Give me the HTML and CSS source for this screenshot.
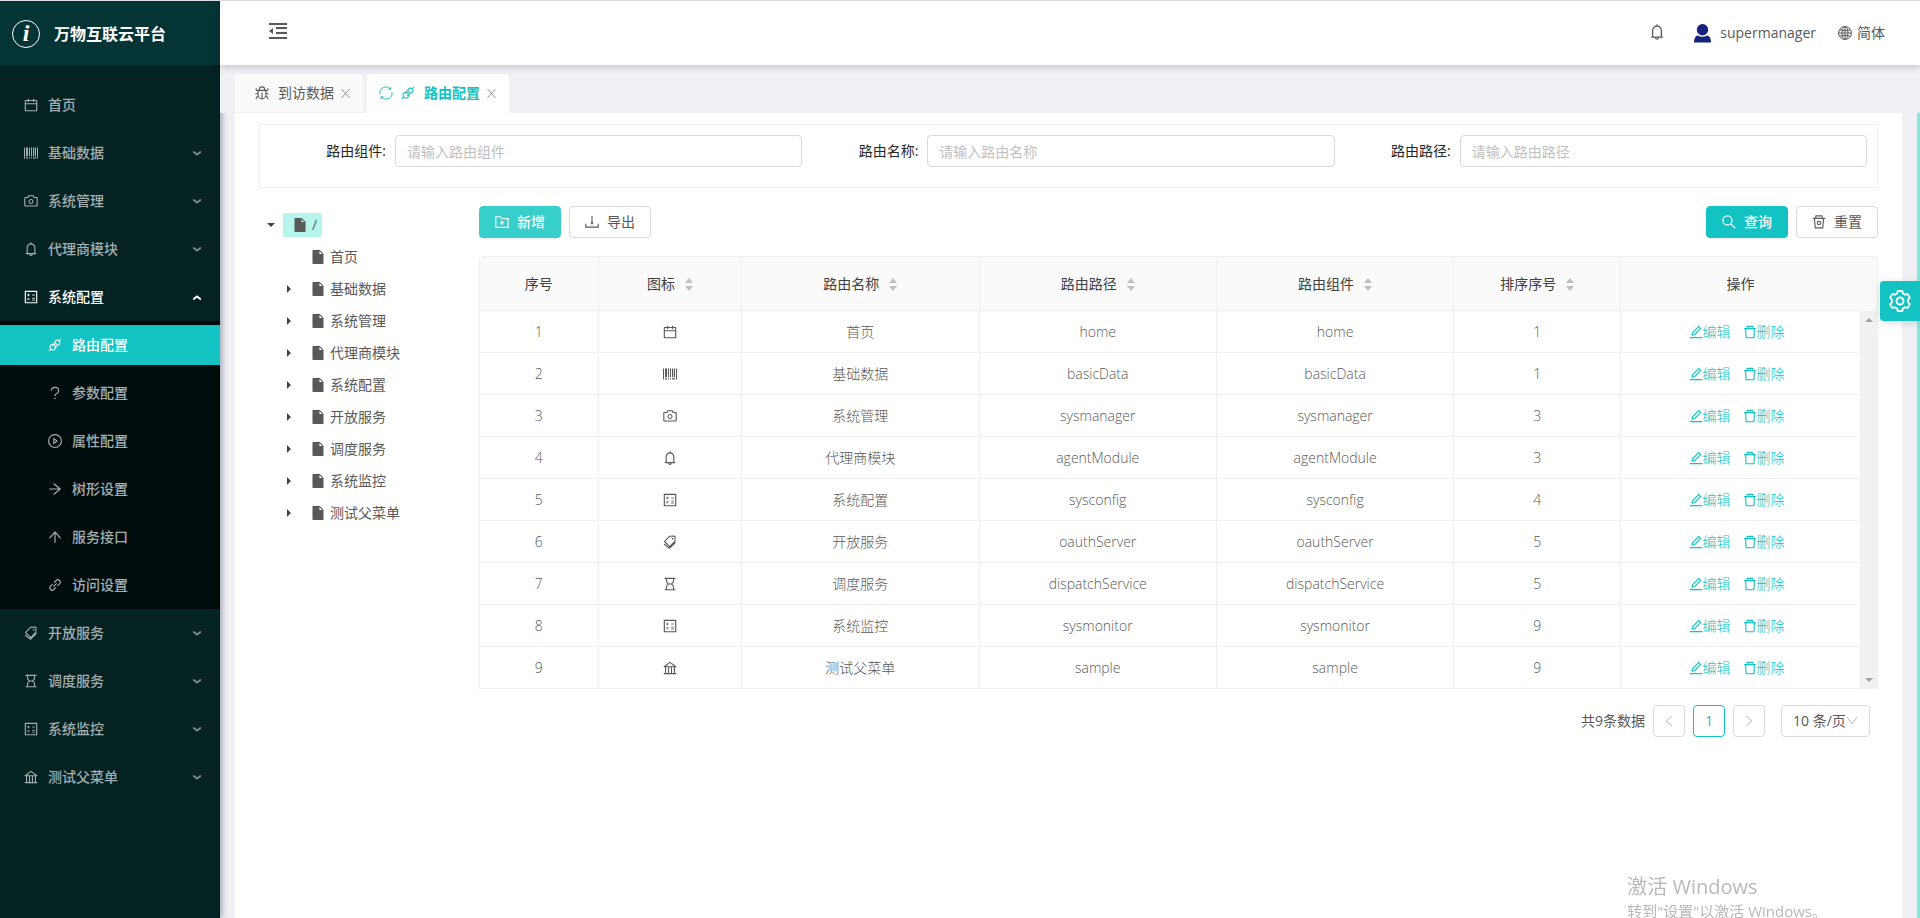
FILE: index.html
```
<!DOCTYPE html>
<html lang="zh-CN">
<head>
    <meta charset="UTF-8">
    <meta name="viewport" content="width=device-width, initial-scale=1.0">
    <title>万物互联云平台</title>
    <link rel="stylesheet" href="styles.css">
</head>
<body>
    <!-- icon sprite -->
    <svg class="sprite" aria-hidden="true">
        <symbol id="i-calendar" viewBox="64 64 896 896"><path d="M880 184H712v-64c0-4.400-3.600-8-8-8h-56c-4.400 0-8 3.600-8 8v64H384v-64c0-4.400-3.600-8-8-8h-56c-4.400 0-8 3.600-8 8v64H144c-17.700 0-32 14.300-32 32v664c0 17.700 14.300 32 32 32h736c17.700 0 32-14.300 32-32V216c0-17.700-14.300-32-32-32zm-40 656H184V460h656v380zM184 392V256h128v48c0 4.400 3.600 8 8 8h56c4.400 0 8-3.600 8-8v-48h256v48c0 4.400 3.600 8 8 8h56c4.400 0 8-3.600 8-8v-48h128v136H184z"/></symbol>
        <symbol id="i-barcode" viewBox="64 64 896 896"><path d="M64 160h64v704H64zM897 160h64v704h-64zM192 160h128v560H192zM384 160h64v560h-64zM512 160h64v560h-64zM640 160h64v560h-64zM752 160h80v560h-80zM192 784h128v80H192zM384 784h64v80h-64zM512 784h64v80h-64zM640 784h192v80H640z"/></symbol>
        <symbol id="i-camera" viewBox="64 64 896 896"><path d="M864 248H728l-32.400-90.800a32 32 0 0 0-30.200-21.200H358.600c-13.500 0-25.600 8.500-30.100 21.200L296 248H160c-44.200 0-80 35.800-80 80v456c0 44.200 35.800 80 80 80h704c44.200 0 80-35.800 80-80V328c0-44.200-35.800-80-80-80zm8 536c0 4.400-3.600 8-8 8H160c-4.400 0-8-3.600-8-8V328c0-4.400 3.600-8 8-8h186.700l17.100-47.800 22.900-64.200h250.500l22.900 64.200 17.100 47.800H864c4.400 0 8 3.600 8 8v456zM512 384c-88.400 0-160 71.600-160 160s71.600 160 160 160 160-71.600 160-160-71.600-160-160-160zm0 256c-53 0-96-43-96-96s43-96 96-96 96 43 96 96-43 96-96 96z"/></symbol>
        <symbol id="i-bell" viewBox="64 64 896 896"><path d="M816 768h-24V428c0-141.100-104.300-257.800-240-277.200V112c0-22.100-17.900-40-40-40s-40 17.900-40 40v38.800C336.300 170.200 232 286.900 232 428v340h-24c-17.700 0-32 14.300-32 32v32c0 4.400 3.600 8 8 8h216c0 61.800 50.200 112 112 112s112-50.200 112-112h216c4.400 0 8-3.600 8-8v-32c0-17.700-14.300-32-32-32zM512 888c-26.500 0-48-21.500-48-48h96c0 26.500-21.500 48-48 48zM304 768V428c0-55.600 21.600-107.800 60.900-147.100S456.400 220 512 220c55.600 0 107.800 21.600 147.100 60.900S720 372.400 720 428v340H304z"/></symbol>
        <symbol id="i-calculator" viewBox="64 64 896 896"><g fill="none" stroke="currentColor"><path stroke-width="72" d="M148 148h728v728H148z"/><path stroke-width="52" d="M260 384h170M345 299v170M585 384h180M585 592h180M585 710h180M275 585l140 140M415 585L275 725"/></g></symbol>
        <symbol id="i-api" viewBox="64 64 896 896"><g fill="none" stroke="currentColor" stroke-width="66"><path d="M415 410l-75 75L245 500q-80 90-35 235l80 80q145 45 235-35l15-95 75-75M609 614l-205-205M485 340l200 200 90-60q80-100 35-195l-70-70q-95-45-195 35zM770 254l135-135M254 770L119 905M530 600l-70 75M425 495l-75 70"/></g></symbol>
        <symbol id="i-question" viewBox="64 64 896 896"><g fill="none" stroke="currentColor" stroke-width="72"><path d="M276 370c0-130 100-218 236-218s236 88 236 210c0 100-60 165-150 200-62 24-86 60-86 115v50"/></g><circle cx="512" cy="864" r="52"/></symbol>
        <symbol id="i-play" viewBox="64 64 896 896"><g fill="none" stroke="currentColor" stroke-width="72"><circle cx="512" cy="512" r="412"/><path d="M438 360l208 152-208 152z"/></g></symbol>
        <symbol id="i-right" viewBox="64 64 896 896"><path d="M869 487.800L491.200 159.900c-2.900-2.500-6.600-3.900-10.500-3.900h-88.500c-7.400 0-10.800 9.200-5.200 14l350.200 304H152c-4.400 0-8 3.600-8 8v60c0 4.400 3.600 8 8 8h585.100L386.900 854c-5.600 4.900-2.200 14 5.200 14h91.500c1.900 0 3.800-.7 5.200-2L869 536.200a32 32 0 0 0 0-48.400z"/></symbol>
        <symbol id="i-up" viewBox="64 64 896 896"><path transform="rotate(-90 512 512)" d="M869 487.800L491.200 159.900c-2.900-2.500-6.600-3.900-10.500-3.900h-88.500c-7.400 0-10.800 9.200-5.200 14l350.200 304H152c-4.400 0-8 3.600-8 8v60c0 4.400 3.600 8 8 8h585.100L386.900 854c-5.600 4.900-2.200 14 5.200 14h91.500c1.900 0 3.800-.7 5.200-2L869 536.200a32 32 0 0 0 0-48.400z"/></symbol>
        <symbol id="i-link" viewBox="64 64 896 896"><g fill="none" stroke="currentColor" stroke-width="72"><path d="M574 665L440 800c-60 60-155 60-215 0s-60-155 0-215l134-134M450 359l134-135c60-60 155-60 215 0s60 155 0 215L665 573M405 619l214-214"/></g></symbol>
        <symbol id="i-tags" viewBox="64 64 896 896"><g fill="none" stroke="currentColor" stroke-width="68"><path d="M484 150l310-20 46 48-22 300-330 330-328-328zM130 640l350 275 380-375"/></g><circle cx="680" cy="300" r="54"/></symbol>
        <symbol id="i-hourglass" viewBox="64 64 896 896"><path fill="none" stroke="currentColor" stroke-width="72" d="M162 148h700M162 876h700M286 148v160c0 95 60 170 140 204-80 34-140 110-140 204v160M738 148v160c0 95-60 170-140 204 80 34 140 110 140 204v160M426 512h172"/></symbol>
        <symbol id="i-bank" viewBox="64 64 896 896"><path d="M894 462c30.900 0 43.800-39.700 18.700-58L530.800 126.200a31.800 31.800 0 0 0-37.600 0L111.300 404c-25.100 18.200-12.200 58 18.800 58H192v374h-72c-4.400 0-8 3.600-8 8v52c0 4.400 3.600 8 8 8h784c4.400 0 8-3.600 8-8v-52c0-4.400-3.600-8-8-8h-72V462h62zM512 196.700l271.100 197.200H240.900L512 196.700zM264 462h117v374H264V462zm189 0h117v374H453V462zm307 374H642V462h118v374z"/></symbol>
        <symbol id="i-bug" viewBox="64 64 896 896"><g fill="none" stroke="currentColor" stroke-width="72"><path d="M260 340h504v280c0 150-112 268-252 268S260 770 260 620zM340 340V300c0-100 74-184 172-184s172 84 172 184v40M512 480v408M140 200v100q0 80 120 80M884 200v100q0 80-120 80M90 560h170M764 560h170M140 910v-70q0-90 130-120M884 910v-70q0-90-130-120"/></g></symbol>
        <symbol id="i-reload" viewBox="64 64 896 896"><g fill="none" stroke="currentColor" stroke-width="60"><path d="M132 580A382 382 0 0 1 800 260M892 444A382 382 0 0 1 224 764"/><path d="M820 130v145H675M204 894V749h145"/></g></symbol>
        <symbol id="i-close" viewBox="64 64 896 896"><path fill="none" stroke="currentColor" stroke-width="76" d="M190 150l644 724M834 150L190 874"/></symbol>
        <symbol id="i-file" viewBox="64 64 896 896"><path d="M854.600 288.700c6 6 9.400 14.100 9.400 22.600V928c0 17.700-14.300 32-32 32H192c-17.700 0-32-14.300-32-32V96c0-17.700 14.300-32 32-32h424.700c8.500 0 16.700 3.400 22.700 9.400l215.200 215.300zM790.200 326L602 137.800V326h188.200z"/></symbol>
        <symbol id="i-folder-add" viewBox="64 64 896 896"><path fill="none" stroke="currentColor" stroke-width="72" d="M116 172h280l124 122h388v558H116zM512 420v280M372 560h280"/></symbol>
        <symbol id="i-export" viewBox="64 64 896 896"><g fill="none" stroke="currentColor" stroke-width="72"><path d="M116 626v214h792V626M512 150v440"/></g><path d="M396 540h232L512 690z"/></symbol>
        <symbol id="i-search" viewBox="64 64 896 896"><g fill="none" stroke="currentColor" stroke-width="80"><circle cx="412" cy="412" r="290"/><path d="M620 620l290 290"/></g></symbol>
        <symbol id="i-rest" viewBox="64 64 896 896"><g fill="none" stroke="currentColor" stroke-width="72"><path d="M296 240l24-118h384l24 118M120 276h784M220 290l50 600h484l50-600"/><circle cx="512" cy="576" r="108"/></g></symbol>
        <symbol id="i-edit" viewBox="64 64 896 896"><path d="M257.700 752c2 0 4-.2 6-.5L431.900 722c2-.4 3.900-1.300 5.300-2.800l423.900-423.900a10 10 0 0 0 0-14.100L694.900 114.900c-1.900-1.900-4.400-2.900-7.100-2.900s-5.200 1-7.100 2.900L256.800 538.800c-1.500 1.500-2.400 3.300-2.800 5.300l-29.500 168.200a33.500 33.500 0 0 0 9.400 29.800c6.600 6.400 14.900 9.900 23.800 9.900zm67.400-174.400L687.800 215l73.300 73.300-362.700 362.600-88.900 15.700 15.600-89zM880 836H144c-17.700 0-32 14.300-32 32v36c0 4.400 3.600 8 8 8h784c4.400 0 8-3.600 8-8v-36c0-17.700-14.300-32-32-32z"/></symbol>
        <symbol id="i-delete" viewBox="64 64 896 896"><path d="M360 184h304v72h72v-80c0-35.300-28.700-64-64-64H352c-35.300 0-64 28.700-64 64v80h72v-72zm504 72H160c-17.700 0-32 14.300-32 32v32c0 4.400 3.600 8 8 8h60.400l24.700 523c1.600 34.100 29.800 61 63.900 61h454c34.200 0 62.300-26.800 63.900-61l24.700-523H888c4.400 0 8-3.600 8-8v-32c0-17.700-14.300-32-32-32zM731.300 840H292.700l-24.200-512h487l-24.200 512z"/></symbol>
        <symbol id="i-global" viewBox="64 64 896 896"><g fill="none" stroke="currentColor" stroke-width="64"><circle cx="512" cy="512" r="410"/><ellipse cx="512" cy="512" rx="190" ry="410"/><path d="M102 512h820M512 102v820M170 310q342 120 684 0M170 714q342-120 684 0"/></g></symbol>
        <symbol id="i-fold" viewBox="0 0 18 18"><path d="M0 1h18v2H0zM7 5h11v2H7zM7 10h11v2H7zM0 15h18v2H0zM0 9l4-3v6z"/></symbol>
        <symbol id="i-user" viewBox="0 0 18 20"><circle cx="9" cy="6" r="6"/><path d="M4 12q5 3 10 0 4 1 4 7.500H0Q0 13 4 12z"/></symbol>
        <symbol id="i-down" viewBox="0 0 8 5"><path fill="none" stroke="currentColor" stroke-width="2" d="M0 0.600l4 3 4-3"/></symbol>
        <symbol id="i-prev" viewBox="0 0 12 12"><path fill="none" stroke="currentColor" d="M9 1L3 6l6 5"/></symbol>
        <symbol id="i-next" viewBox="0 0 12 12"><path fill="none" stroke="currentColor" d="M3 1l6 5-6 5"/></symbol>
        <symbol id="i-select" viewBox="0 0 12 12"><path fill="none" stroke="currentColor" d="M1 2l5 7 5-7"/></symbol>
        <symbol id="i-sort" viewBox="0 0 8 14"><path d="M4 0l4 5H0zM4 13l4-5H0z"/></symbol>
        <symbol id="i-setting" viewBox="64 64 896 896"><path transform="translate(36 36) scale(.93)" fill="none" stroke="currentColor" stroke-width="80" d="M924.800 625.700l-65.500-56c3.100-19 4.700-38.400 4.700-57.800s-1.600-38.800-4.700-57.800l65.500-56a32 32 0 0 0 9.300-35.200l-.9-2.600a442.500 442.500 0 0 0-79.700-137.900l-1.800-2.100a32 32 0 0 0-35.100-9.500l-81.300 28.900c-30-24.600-63.500-44-99.700-57.600l-15.700-85a32 32 0 0 0-25.800-25.700l-2.700-.5c-52.100-9.400-106.900-9.400-159 0l-2.700.5a32 32 0 0 0-25.800 25.700l-15.800 85.400a351.900 351.900 0 0 0-99 57.400l-81.900-29.100a32 32 0 0 0-35.100 9.500l-1.800 2.100a446 446 0 0 0-79.700 137.900l-.9 2.600c-4.500 12.500-.8 26.500 9.300 35.200l66.300 56.600c-3.100 18.800-4.600 38-4.600 57.100 0 19.200 1.500 38.400 4.600 57.100L99 625.500a32 32 0 0 0-9.300 35.200l.9 2.600c18.100 50.400 44.900 96.900 79.700 137.900l1.800 2.100a32 32 0 0 0 35.100 9.500l81.900-29.100c29.800 24.500 63.100 43.900 99 57.400l15.800 85.400a32 32 0 0 0 25.800 25.700l2.700.5a449.400 449.400 0 0 0 159 0l2.700-.5a32 32 0 0 0 25.800-25.700l15.700-85a350 350 0 0 0 99.700-57.600l81.300 28.900a32 32 0 0 0 35.100-9.500l1.800-2.100c34.800-41.100 61.600-87.500 79.700-137.900l.9-2.600c4.500-12.300.8-26.300-9.300-35z"/><circle cx="512" cy="512" r="142" fill="none" stroke="currentColor" stroke-width="76"/></symbol>
    </svg>

    <aside class="sidebar">
        <div class="logo">
            <span class="logo-mark">i</span>
            <h1>万物互联云平台</h1>
        </div>
        <nav class="menu">
            <a href="#" class="menu-item"><svg class="icon"><use href="#i-calendar"/></svg>首页</a>
            <a href="#" class="menu-item"><svg class="icon"><use href="#i-barcode"/></svg>基础数据<svg class="arrow"><use href="#i-down"/></svg></a>
            <a href="#" class="menu-item"><svg class="icon"><use href="#i-camera"/></svg>系统管理<svg class="arrow"><use href="#i-down"/></svg></a>
            <a href="#" class="menu-item"><svg class="icon"><use href="#i-bell"/></svg>代理商模块<svg class="arrow"><use href="#i-down"/></svg></a>
            <a href="#" class="menu-item open"><svg class="icon"><use href="#i-calculator"/></svg>系统配置<svg class="arrow"><use href="#i-down"/></svg></a>
            <div class="submenu">
                <a href="#" class="menu-item active"><svg class="icon"><use href="#i-api"/></svg>路由配置</a>
                <a href="#" class="menu-item"><svg class="icon"><use href="#i-question"/></svg>参数配置</a>
                <a href="#" class="menu-item"><svg class="icon"><use href="#i-play"/></svg>属性配置</a>
                <a href="#" class="menu-item"><svg class="icon"><use href="#i-right"/></svg>树形设置</a>
                <a href="#" class="menu-item"><svg class="icon"><use href="#i-up"/></svg>服务接口</a>
                <a href="#" class="menu-item"><svg class="icon"><use href="#i-link"/></svg>访问设置</a>
            </div>
            <a href="#" class="menu-item"><svg class="icon"><use href="#i-tags"/></svg>开放服务<svg class="arrow"><use href="#i-down"/></svg></a>
            <a href="#" class="menu-item"><svg class="icon"><use href="#i-hourglass"/></svg>调度服务<svg class="arrow"><use href="#i-down"/></svg></a>
            <a href="#" class="menu-item"><svg class="icon"><use href="#i-calculator"/></svg>系统监控<svg class="arrow"><use href="#i-down"/></svg></a>
            <a href="#" class="menu-item"><svg class="icon"><use href="#i-bank"/></svg>测试父菜单<svg class="arrow"><use href="#i-down"/></svg></a>
        </nav>
    </aside>

    <div class="main">
        <header class="header">
            <button class="plain" aria-label="收起菜单"><svg class="fold"><use href="#i-fold"/></svg></button>
            <div class="header-right">
                <button class="plain" aria-label="通知"><svg class="bell"><use href="#i-bell"/></svg></button>
                <a href="#" class="user"><svg class="avatar"><use href="#i-user"/></svg>supermanager</a>
                <a href="#" class="lang"><svg class="icon"><use href="#i-global"/></svg>简体</a>
            </div>
        </header>

        <div class="tabs">
            <div class="tab">
                <svg class="icon"><use href="#i-bug"/></svg>
                <a href="#">到访数据</a>
                <button class="plain" aria-label="关闭"><svg class="close"><use href="#i-close"/></svg></button>
            </div>
            <div class="tab current">
                <svg class="icon reload"><use href="#i-reload"/></svg>
                <svg class="icon"><use href="#i-api"/></svg>
                <a href="#">路由配置</a>
                <button class="plain" aria-label="关闭"><svg class="close"><use href="#i-close"/></svg></button>
            </div>
        </div>

        <div class="content">
            <main class="panel">
                <form class="search">
                    <div class="field">
                        <label for="component">路由组件:</label>
                        <input type="text" id="component" placeholder="请输入路由组件">
                    </div>
                    <div class="field">
                        <label for="name">路由名称:</label>
                        <input type="text" id="name" placeholder="请输入路由名称">
                    </div>
                    <div class="field">
                        <label for="path">路由路径:</label>
                        <input type="text" id="path" placeholder="请输入路由路径">
                    </div>
                </form>

                <div class="columns">
                    <ul class="tree">
                        <li class="root"><span class="caret down"></span><a href="#" class="selected"><svg class="icon"><use href="#i-file"/></svg>/</a></li>
                        <li><span class="caret none"></span><a href="#"><svg class="icon"><use href="#i-file"/></svg>首页</a></li>
                        <li><span class="caret"></span><a href="#"><svg class="icon"><use href="#i-file"/></svg>基础数据</a></li>
                        <li><span class="caret"></span><a href="#"><svg class="icon"><use href="#i-file"/></svg>系统管理</a></li>
                        <li><span class="caret"></span><a href="#"><svg class="icon"><use href="#i-file"/></svg>代理商模块</a></li>
                        <li><span class="caret"></span><a href="#"><svg class="icon"><use href="#i-file"/></svg>系统配置</a></li>
                        <li><span class="caret"></span><a href="#"><svg class="icon"><use href="#i-file"/></svg>开放服务</a></li>
                        <li><span class="caret"></span><a href="#"><svg class="icon"><use href="#i-file"/></svg>调度服务</a></li>
                        <li><span class="caret"></span><a href="#"><svg class="icon"><use href="#i-file"/></svg>系统监控</a></li>
                        <li><span class="caret"></span><a href="#"><svg class="icon"><use href="#i-file"/></svg>测试父菜单</a></li>
                    </ul>

                    <section class="list">
                        <div class="toolbar">
                            <button class="btn primary light"><svg class="icon"><use href="#i-folder-add"/></svg>新增</button>
                            <button class="btn"><svg class="icon"><use href="#i-export"/></svg>导出</button>
                            <button class="btn primary push"><svg class="icon"><use href="#i-search"/></svg>查询</button>
                            <button class="btn"><svg class="icon"><use href="#i-rest"/></svg>重置</button>
                        </div>

                        <div class="table-box">
                            <table>
                                <colgroup>
                                    <col class="c-no"><col class="c-icon"><col class="c-text"><col class="c-text"><col class="c-text"><col class="c-sort"><col>
                                </colgroup>
                                <thead>
                                    <tr>
                                        <th>序号</th>
                                        <th>图标<svg class="sort"><use href="#i-sort"/></svg></th>
                                        <th>路由名称<svg class="sort"><use href="#i-sort"/></svg></th>
                                        <th>路由路径<svg class="sort"><use href="#i-sort"/></svg></th>
                                        <th>路由组件<svg class="sort"><use href="#i-sort"/></svg></th>
                                        <th>排序序号<svg class="sort"><use href="#i-sort"/></svg></th>
                                        <th>操作</th>
                                    </tr>
                                </thead>
                                <tbody>
                                    <tr><td>1</td><td><svg class="icon"><use href="#i-calendar"/></svg></td><td>首页</td><td>home</td><td>home</td><td>1</td><td class="ops"><a href="#"><svg class="icon"><use href="#i-edit"/></svg>编辑</a><a href="#"><svg class="icon"><use href="#i-delete"/></svg>删除</a></td></tr>
                                    <tr><td>2</td><td><svg class="icon"><use href="#i-barcode"/></svg></td><td>基础数据</td><td>basicData</td><td>basicData</td><td>1</td><td class="ops"><a href="#"><svg class="icon"><use href="#i-edit"/></svg>编辑</a><a href="#"><svg class="icon"><use href="#i-delete"/></svg>删除</a></td></tr>
                                    <tr><td>3</td><td><svg class="icon"><use href="#i-camera"/></svg></td><td>系统管理</td><td>sysmanager</td><td>sysmanager</td><td>3</td><td class="ops"><a href="#"><svg class="icon"><use href="#i-edit"/></svg>编辑</a><a href="#"><svg class="icon"><use href="#i-delete"/></svg>删除</a></td></tr>
                                    <tr><td>4</td><td><svg class="icon"><use href="#i-bell"/></svg></td><td>代理商模块</td><td>agentModule</td><td>agentModule</td><td>3</td><td class="ops"><a href="#"><svg class="icon"><use href="#i-edit"/></svg>编辑</a><a href="#"><svg class="icon"><use href="#i-delete"/></svg>删除</a></td></tr>
                                    <tr><td>5</td><td><svg class="icon"><use href="#i-calculator"/></svg></td><td>系统配置</td><td>sysconfig</td><td>sysconfig</td><td>4</td><td class="ops"><a href="#"><svg class="icon"><use href="#i-edit"/></svg>编辑</a><a href="#"><svg class="icon"><use href="#i-delete"/></svg>删除</a></td></tr>
                                    <tr><td>6</td><td><svg class="icon"><use href="#i-tags"/></svg></td><td>开放服务</td><td>oauthServer</td><td>oauthServer</td><td>5</td><td class="ops"><a href="#"><svg class="icon"><use href="#i-edit"/></svg>编辑</a><a href="#"><svg class="icon"><use href="#i-delete"/></svg>删除</a></td></tr>
                                    <tr><td>7</td><td><svg class="icon"><use href="#i-hourglass"/></svg></td><td>调度服务</td><td>dispatchService</td><td>dispatchService</td><td>5</td><td class="ops"><a href="#"><svg class="icon"><use href="#i-edit"/></svg>编辑</a><a href="#"><svg class="icon"><use href="#i-delete"/></svg>删除</a></td></tr>
                                    <tr><td>8</td><td><svg class="icon"><use href="#i-calculator"/></svg></td><td>系统监控</td><td>sysmonitor</td><td>sysmonitor</td><td>9</td><td class="ops"><a href="#"><svg class="icon"><use href="#i-edit"/></svg>编辑</a><a href="#"><svg class="icon"><use href="#i-delete"/></svg>删除</a></td></tr>
                                    <tr><td>9</td><td><svg class="icon"><use href="#i-bank"/></svg></td><td>测试父菜单</td><td>sample</td><td>sample</td><td>9</td><td class="ops"><a href="#"><svg class="icon"><use href="#i-edit"/></svg>编辑</a><a href="#"><svg class="icon"><use href="#i-delete"/></svg>删除</a></td></tr>
                                </tbody>
                            </table>
                            <div class="scroll-side">
                                <div class="scroll-head"></div>
                                <div class="scroll-track"><span class="scroll-up"></span><span class="scroll-down"></span></div>
                            </div>
                        </div>

                        <div class="pagination">
                            <span class="total">共9条数据</span>
                            <button class="page" disabled aria-label="上一页"><svg class="mini"><use href="#i-prev"/></svg></button>
                            <button class="page on">1</button>
                            <button class="page" disabled aria-label="下一页"><svg class="mini"><use href="#i-next"/></svg></button>
                            <div class="size">
                                <select aria-label="每页条数">
                                    <option>10 条/页</option>
                                </select>
                                <svg class="mini"><use href="#i-select"/></svg>
                            </div>
                        </div>
                    </section>
                </div>
            </main>
        </div>
    </div>

    <button class="setting" aria-label="设置"><svg><use href="#i-setting"/></svg></button>
    <div class="activate">
        <p class="activate-title">激活 Windows</p>
        <p>转到"设置"以激活 Windows。</p>
    </div>
</body>
</html>
```

FILE: styles.css
```
* {
    box-sizing: border-box;
}
body {
    margin: 0;
    display: flex;
    height: 100vh;
    overflow: hidden;
    border-top: 1px solid #d9dbdf;
    background-color: #f0f1f5;
    color: #595959;
    font: 14px/22px "Open Sans", "Noto Sans CJK SC", sans-serif;
}
a {
    color: inherit;
    text-decoration: none;
}
svg {
    display: block;
    flex: none;
    fill: currentColor;
}
.sprite {
    position: absolute;
    width: 0;
    height: 0;
}
.icon {
    width: 14px;
    height: 14px;
}
button, input, select {
    font: inherit;
    color: inherit;
}
.plain {
    padding: 0;
    border: none;
    background: none;
    cursor: pointer;
}

/* sidebar */
.sidebar {
    position: relative;
    z-index: 1;
    flex: none;
    width: 220px;
    background-color: #042222;
    box-shadow: 2px 0 6px rgba(0, 21, 41, 0.35);
}
.logo {
    display: flex;
    align-items: center;
    gap: 14px;
    height: 64px;
    padding: 2px 12px 0;
    background-color: #053434;
}
.logo-mark {
    width: 28px;
    height: 28px;
    border: 1px solid #fff;
    border-radius: 50%;
    color: #fff;
    font: italic bold 24px/25px "Liberation Serif", serif;
    text-align: center;
}
.logo h1 {
    margin: 0;
    color: #fff;
    font-size: 16px;
    font-weight: 700;
}
.menu, .submenu {
    display: flex;
    flex-direction: column;
}
.menu {
    padding-top: 16px;
}
.menu-item {
    display: flex;
    align-items: center;
    gap: 10px;
    height: 40px;
    margin: 4px 0;
    padding: 0 19px 0 24px;
    color: #a5afaf;
    font-weight: 500;
}
.arrow {
    width: 8px;
    height: 5px;
    margin-left: auto;
    color: #7d8b8b;
}
.menu-item.open {
    color: #fff;
}
.open .arrow {
    color: #fff;
    transform: rotate(180deg);
}
.submenu {
    background-color: #010d0d;
    box-shadow: inset 0 2px 8px rgba(0, 0, 0, 0.45);
}
.submenu .menu-item {
    padding-left: 48px;
}
.submenu .active {
    background-color: #13c2c2;
    color: #fff;
}

/* header */
.main {
    display: flex;
    flex: 1;
    flex-direction: column;
    min-width: 0;
}
.header {
    position: relative;
    z-index: 3;
    flex: none;
    display: flex;
    align-items: center;
    justify-content: space-between;
    height: 64px;
    padding: 0 35px 0 49px;
    background-color: #fff;
    box-shadow: 0 2px 8px rgba(0, 0, 0, 0.2);
}
.fold {
    width: 18px;
    height: 18px;
    margin-bottom: 4px;
}
.header-right, .user, .lang {
    display: flex;
    align-items: center;
}
.bell {
    width: 16px;
    height: 16px;
    margin-bottom: 2px;
}
.user {
    gap: 9px;
    margin: 0 22px 0 29px;
}
.avatar {
    width: 17px;
    height: 19px;
    color: #13227a;
}
.lang {
    gap: 5px;
}

/* tabs */
.tabs {
    position: relative;
    z-index: 2;
    flex: none;
    display: flex;
    gap: 4px;
    height: 48px;
    padding: 9px 15px 0;
    background-color: #f0f1f5;
}
.tab {
    display: flex;
    align-items: center;
    padding: 0 12px 0 20px;
    border: solid #eeeeee;
    border-width: 0 0 1px;
    border-radius: 4px 4px 0 0;
    background-color: #fafafa;
}
.tab a {
    margin: 0 6px 0 9px;
}
.close {
    width: 11px;
    height: 11px;
    color: #8c8c8c;
}
.tab.current {
    padding-left: 12px;
    border-color: #fff;
    background-color: #fff;
    color: #13c2c2;
    font-weight: 700;
}
.reload {
    margin-right: 8px;
}

/* content */
.content {
    flex: 1;
    display: flex;
    padding: 0 15px;
    border-right: 3px solid #87e8de;
}
.panel {
    flex: 1;
    min-width: 0;
    padding: 11px 24px;
    background-color: #fff;
}
.search {
    display: grid;
    grid-template-columns: repeat(3, 1fr);
    padding: 10px 10px 20px;
    border: 1px solid #f0f0f2;
}
.field {
    display: flex;
    align-items: center;
}
.field label {
    flex: none;
    width: 125px;
    padding-right: 9px;
    color: #262626;
    text-align: right;
}
.field input {
    flex: 1;
    min-width: 0;
    height: 32px;
    padding: 0 11px;
    border: 1px solid #d9d9d9;
    border-radius: 4px;
    background-color: #fff;
}
.field input::placeholder {
    color: #bfbfbf;
}
.columns {
    display: flex;
    margin-top: 18px;
}
.tree {
    flex: none;
    width: 220px;
    margin: 0;
    padding: 3px 0 0 26px;
    list-style: none;
}
.tree li {
    display: flex;
    align-items: center;
    gap: 7px;
    height: 32px;
}
.tree li.root {
    gap: 8px;
    margin-left: -18px;
}
.tree a {
    display: flex;
    align-items: center;
    gap: 5px;
    height: 24px;
    padding: 0 5px 0 10px;
    border-radius: 2px;
}
.tree .selected {
    background-color: #b5f5ec;
}
.caret {
    width: 7px;
    margin-left: 2px;
    border: solid transparent;
    border-width: 4px 0 4px 4px;
    border-left-color: #454545;
}
.caret.down {
    width: 8px;
    margin-left: 0;
    border-color: #454545 transparent transparent;
    border-width: 4px 4px 0;
}
.caret.none {
    visibility: hidden;
}
.list {
    flex: 1;
    min-width: 0;
}
.toolbar {
    display: flex;
    gap: 8px;
    margin-bottom: 18px;
}
.btn {
    display: flex;
    align-items: center;
    gap: 8px;
    height: 32px;
    padding: 0 15px;
    border: 1px solid #d9d9d9;
    border-radius: 4px;
    background-color: #fff;
    cursor: pointer;
}
.btn.primary {
    border-color: #13c2c2;
    background-color: #13c2c2;
    color: #fff;
    font-weight: 500;
    box-shadow: 0 2px 0 rgba(0, 0, 0, 0.04);
}
.btn.light {
    border-color: #36cfc9;
    background-color: #36cfc9;
}
.btn.push {
    margin-left: auto;
}

/* table */
.table-box {
    display: flex;
    border: 1px solid #f0f0f0;
    border-width: 1px 0 0 1px;
    border-radius: 4px 4px 0 0;
}
table {
    flex: 1;
    min-width: 0;
    table-layout: fixed;
    border-collapse: separate;
    border-spacing: 0;
    text-align: center;
}
.c-no {
    width: 8.6%;
}
.c-icon {
    width: 10.4%;
}
.c-text {
    width: 17.2%;
}
.c-sort {
    width: 12.1%;
}
th, td {
    height: 42px;
    padding: 0;
    border: solid #f0f0f0;
    border-width: 0 1px 1px 0;
}
td {
    font-weight: 300;
}
th {
    height: 54px;
    background-color: #fafafa;
    color: #404040;
    font-weight: 400;
}
th:last-child, td:last-child {
    border-right: none;
}
td .icon {
    margin: 0 auto;
}
.sort {
    display: inline-block;
    width: 8px;
    height: 14px;
    margin-left: 10px;
    color: #bfbfbf;
    vertical-align: -3px;
}
.ops {
    padding-right: 8px;
    color: #13c2c2;
}
.ops a + a {
    margin-left: 12px;
}
.ops .icon {
    display: inline-block;
    vertical-align: -2px;
}
.scroll-side {
    display: flex;
    flex: none;
    flex-direction: column;
    width: 18px;
}
.scroll-head {
    height: 54px;
    border-right: 1px solid #f0f0f0;
    background-color: #fafafa;
}
.scroll-track {
    flex: 1;
    display: flex;
    flex-direction: column;
    align-items: center;
    justify-content: space-between;
    padding: 7px 0;
    background-color: #f1f1f1;
}
.scroll-up, .scroll-down {
    border: 4px solid transparent;
}
.scroll-up {
    border-top-width: 0;
    border-bottom-color: #a3a3a3;
}
.scroll-down {
    border-bottom-width: 0;
    border-top-color: #a3a3a3;
}

/* pagination */
.pagination {
    display: flex;
    align-items: center;
    justify-content: flex-end;
    gap: 8px;
    margin-top: 16px;
    padding-right: 8px;
}
.page {
    display: flex;
    align-items: center;
    justify-content: center;
    width: 32px;
    height: 32px;
    padding: 0;
    border: 1px solid #d9d9d9;
    border-radius: 4px;
    background-color: #fff;
}
.page:disabled {
    color: #bfbfbf;
}
.page.on {
    border-color: #13c2c2;
    color: #13c2c2;
}
.mini {
    width: 12px;
    height: 12px;
}
.size {
    display: grid;
    align-items: center;
    margin-left: 8px;
}
.size select {
    grid-area: 1 / 1;
    width: 89px;
    height: 32px;
    padding: 0 11px;
    border: 1px solid #d9d9d9;
    border-radius: 4px;
    background-color: #fff;
    appearance: none;
}
.size .mini {
    grid-area: 1 / 1;
    justify-self: end;
    margin-right: 12px;
    color: #bfbfbf;
    pointer-events: none;
}

/* floating parts */
.setting {
    position: fixed;
    z-index: 4;
    top: 281px;
    right: 0;
    display: flex;
    align-items: center;
    justify-content: center;
    width: 40px;
    height: 40px;
    padding: 0;
    border: none;
    border-radius: 4px 0 0 4px;
    background-color: #13c2c2;
    color: #fff;
    box-shadow: 0 2px 8px rgba(0, 0, 0, 0.15);
}
.setting svg {
    width: 22px;
    height: 22px;
}
.activate {
    position: fixed;
    right: 93px;
    bottom: 0;
    color: #b9b9b9;
    font-size: 15px;
    line-height: 14px;
    pointer-events: none;
}
.activate p {
    margin: 0;
}
.activate .activate-title {
    font-size: 20px;
    line-height: 34px;
}
```
